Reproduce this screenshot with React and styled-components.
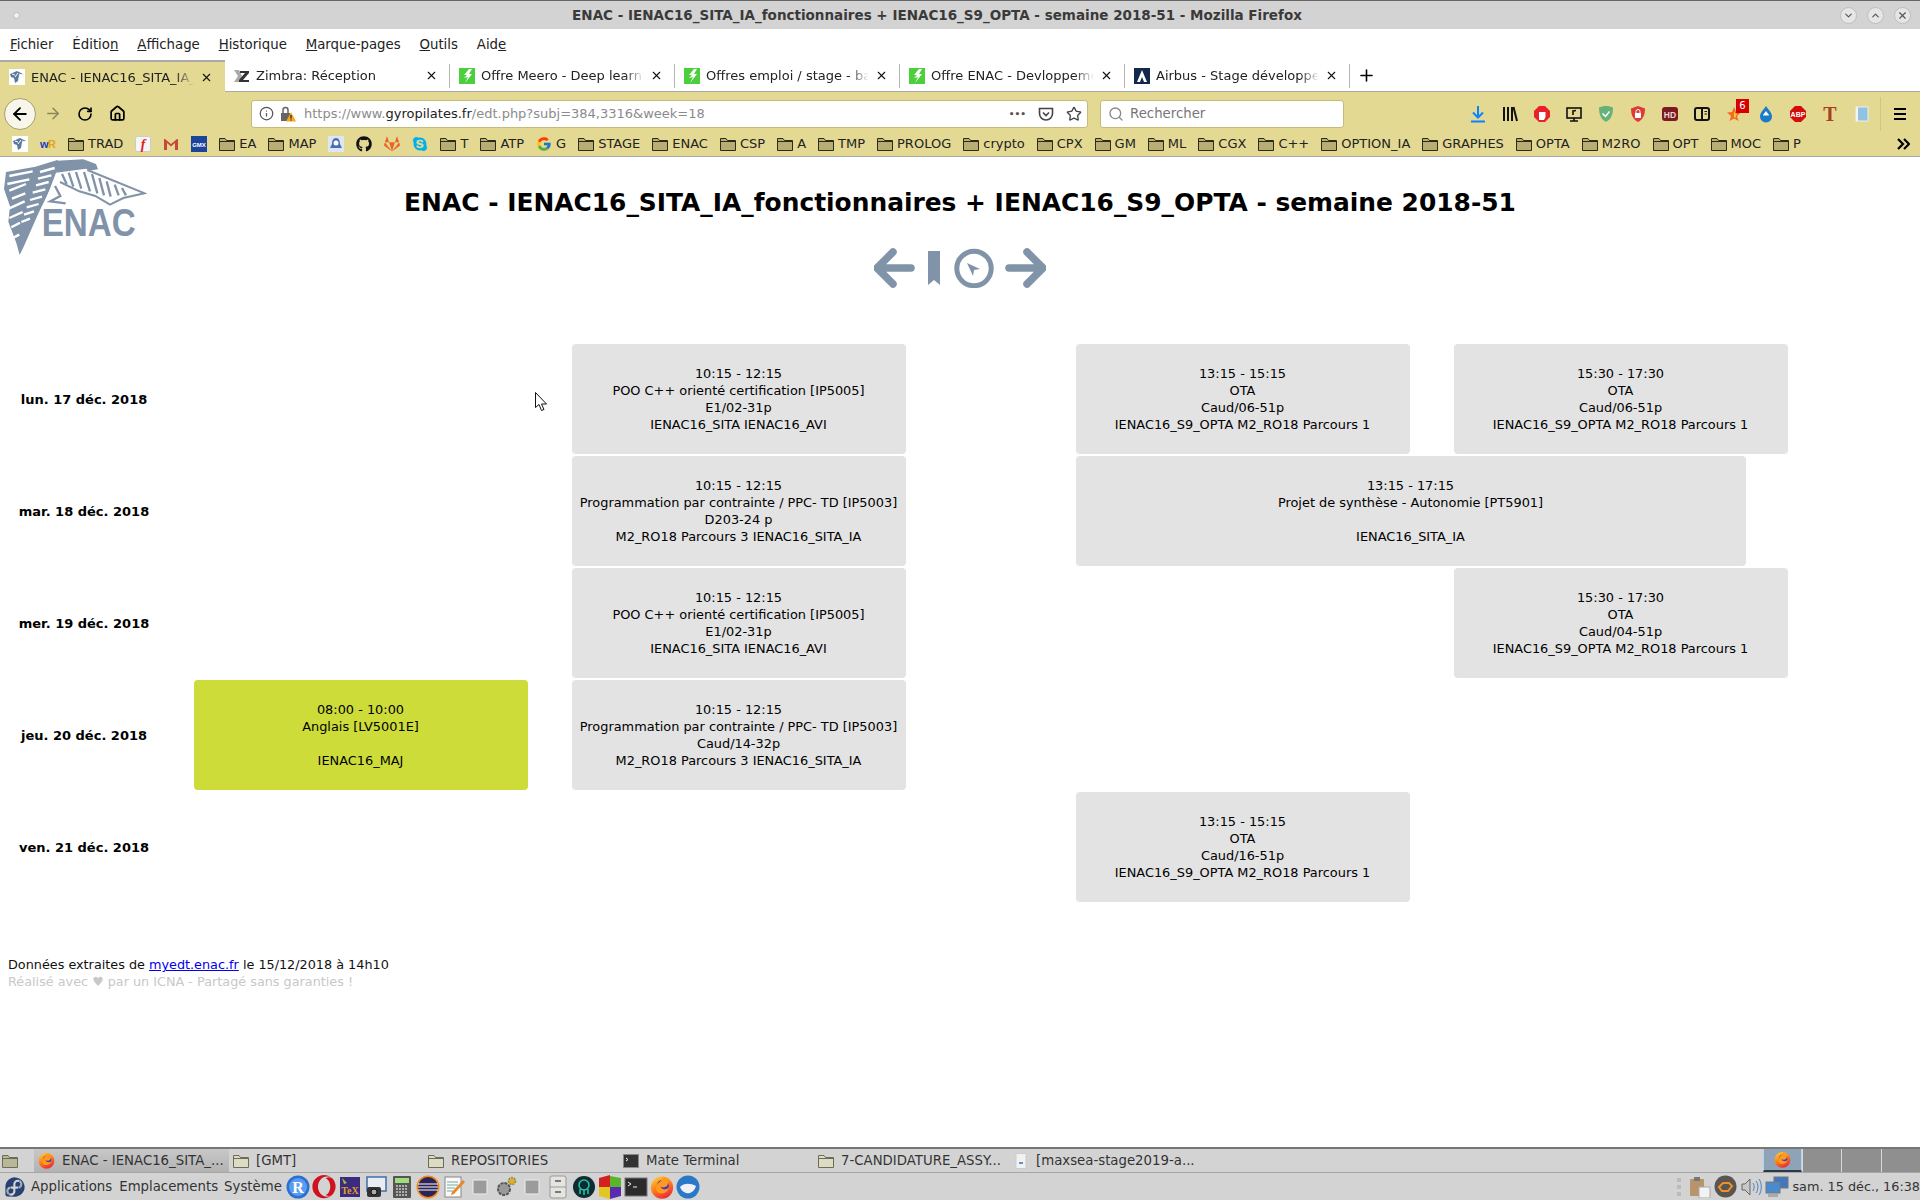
import styled, { createGlobalStyle } from 'styled-components'
import { ArrowLeft, ArrowRight, RotateCw, Home, Info, Star, Search, Plus, X, ChevronDown, ChevronUp } from 'lucide-react'
import { FaGithub, FaGitlab, FaSkype, FaFedora, FaOpera } from 'react-icons/fa'
import { FcGoogle } from 'react-icons/fc'

const Global = createGlobalStyle`
  html, body { margin: 0; padding: 0; background: #fff; overflow: hidden; }
  body { font-family: "DejaVu Sans", sans-serif; font-size: 13px; color: #000; }
  * { box-sizing: border-box; }
`

const Screen = styled.div`
  width: 1920px;
  height: 1200px;
  display: flex;
  flex-direction: column;
  position: relative;
  overflow: hidden;
`

const TitleBar = styled.div`
  height: 29px;
  flex: none;
  background: #d3d3d3;
  border-top: 1px solid #666;
  display: grid;
  grid-template-columns: 1fr auto 1fr;
  align-items: center;
  padding: 0 9px 0 13px;
  color: #3a3a3a;
  font-weight: bold;
  font-size: 13.5px;
`

const WindowTitle = styled.span`
  margin-right: 50px;
`

const WindowDot = styled.span`
  width: 7px;
  height: 7px;
  border-radius: 50%;
  background: #f2f2f2;
  border: 1px solid #bbb;
`

const WindowButtons = styled.div`
  display: flex;
  justify-content: flex-end;
  gap: 10px;
`

const WindowButton = styled.span`
  width: 17px;
  height: 17px;
  border-radius: 50%;
  background: #e6e6e6;
  border: 1px solid #bdbdbd;
  display: flex;
  align-items: center;
  justify-content: center;
  color: #555;
`

const MenuBar = styled.div`
  height: 31px;
  flex: none;
  display: flex;
  align-items: center;
  gap: 18.9px;
  padding-left: 10px;
  font-size: 13.3px;
  color: #222;
`

const TabStrip = styled.div`
  height: 32px;
  flex: none;
  display: flex;
  align-items: stretch;
  border-bottom: 1px solid #a9a9a9;
`

const Tab = styled.div`
  width: 225px;
  position: relative;
  display: flex;
  align-items: center;
  padding-left: 9px;
  gap: 6px;
  font-size: 13px;
  color: #222;
  background: ${p => (p.$active ? '#e3d992' : '#fff')};
  border-top: ${p => (p.$active ? '2px solid #a9a9a9' : '0')};
  margin-bottom: ${p => (p.$active ? '-1px' : '0')};
`

const TabLabel = styled.span`
  width: 163px;
  white-space: nowrap;
  overflow: hidden;
  -webkit-mask-image: linear-gradient(90deg, #000 88%, transparent);
  mask-image: linear-gradient(90deg, #000 88%, transparent);
`

const TabClose = styled.span`
  display: flex;
  color: #111;
`

const TabDivider = styled.span`
  width: 1px;
  height: 24px;
  background: #b5b5b5;
  align-self: center;
  margin-left: auto;
`

const NewTab = styled.span`
  display: flex;
  align-items: center;
  margin-left: 7px;
  color: #000;
`

const Toolbar = styled.div`
  height: 43px;
  flex: none;
  background: #e3d992;
  display: flex;
  align-items: center;
  padding-left: 4px;
`

const BackButton = styled.span`
  width: 32px;
  height: 32px;
  border-radius: 50%;
  background: #f8f6ea;
  border: 1px solid #a59f70;
  display: flex;
  align-items: center;
  justify-content: center;
`

const NavButton = styled.span`
  width: 18px;
  display: flex;
  justify-content: center;
  margin-left: ${p => p.$gap}px;
  color: ${p => p.$color || '#000'};
`

const UrlBar = styled.div`
  width: 837px;
  height: 28px;
  margin-left: 125px;
  background: #fff;
  border: 1px solid #c4bb7c;
  border-radius: 3px;
  display: flex;
  align-items: center;
  padding-left: 7px;
  font-size: 13px;
  color: #8b8b8b;
`

const UrlIcons = styled.span`
  display: flex;
  align-items: center;
  gap: 6px;
  width: 45px;
  color: #555;
`

const UrlHost = styled.span`
  color: #222;
`

const UrlActions = styled.span`
  margin-left: auto;
  display: flex;
  align-items: center;
  gap: 12px;
  padding-right: 5px;
  color: #444;
`

const Dots = styled.span`
  font-weight: bold;
  font-size: 9px;
  color: #555;
`

const SearchBar = styled.div`
  width: 244px;
  height: 28px;
  margin-left: 12px;
  background: #fff;
  border: 1px solid #c4bb7c;
  border-radius: 3px;
  display: flex;
  align-items: center;
  gap: 6px;
  padding-left: 7px;
  font-size: 13.3px;
  color: #777;
`

const ExtIcons = styled.div`
  margin-left: auto;
  padding-right: 4px;
  display: flex;
  align-items: center;
`

const ExtIcon = styled.span`
  width: 32px;
  height: 24px;
  position: relative;
  display: flex;
  align-items: center;
  justify-content: center;
`

const Badge = styled.span`
  position: absolute;
  top: -3px;
  right: 1px;
  width: 13px;
  height: 14px;
  background: #d70000;
  color: #fff;
  font-size: 10px;
  line-height: 14px;
  text-align: center;
`

const ToolbarDivider = styled.span`
  width: 1px;
  height: 34px;
  background: #cfc585;
  margin: 0 3px 0 2px;
`

const BookmarksBar = styled.div`
  height: 22px;
  flex: none;
  background: #e3d992;
  border-bottom: 1px solid #a9a9a9;
  display: flex;
  align-items: center;
  gap: 12px;
  padding: 0 10px 4px 12px;
  font-size: 13px;
  color: #222;
`

const Bookmark = styled.span`
  display: flex;
  align-items: center;
  gap: 4px;
  white-space: nowrap;
`

const Overflow = styled.span`
  margin-left: auto;
  display: flex;
`

const Page = styled.main`
  flex: 1;
  background: #fff;
`

const Header = styled.header`
  display: grid;
  grid-template-columns: 1fr auto 1fr;
  height: 187px;
`

const Logo = styled.svg`
  display: block;
  width: 147px;
  height: 100px;
`

const TitleColumn = styled.div`
  display: flex;
  flex-direction: column;
  align-items: center;
`

const Heading = styled.h1`
  margin: 29px 0 28px;
  font-size: 24.9px;
  line-height: 34px;
  font-weight: bold;
  white-space: nowrap;
`

const WeekNav = styled.nav`
  width: 172px;
  height: 40px;
`

const Schedule = styled.section`
  display: grid;
  grid-template-columns: 193.5px repeat(38, 42px);
  grid-auto-rows: 110px;
  row-gap: 2px;
`

const DayLabel = styled.div`
  grid-column: 1;
  grid-row: ${p => p.$row};
  width: 168px;
  display: flex;
  align-items: center;
  justify-content: center;
  font-weight: bold;
  font-size: 13px;
`

const Course = styled.div`
  grid-row: ${p => p.$row};
  grid-column: ${p => p.$start + 2} / span ${p => p.$span};
  margin-right: 2px;
  background: ${p => (p.$green ? '#cddc39' : '#e3e3e3')};
  border-radius: 4px;
  display: flex;
  flex-direction: column;
  justify-content: center;
  text-align: center;
  font-size: 12.9px;
  line-height: 17px;
`

const CourseLine = styled.div`
  min-height: 17px;
  white-space: nowrap;
`

const Footer = styled.footer`
  margin-top: 54px;
  padding-left: 8px;
  font-size: 12.8px;
  line-height: 17px;
  color: #111;

  a {
    color: #0000ee;
  }
`

const Credit = styled.div`
  color: #c8c8c8;
`

const Cursor = styled.svg`
  position: absolute;
  left: 535px;
  top: 392px;
`

const Taskbar = styled.div`
  height: 53px;
  flex: none;
  background: #d3d3d3;
  border-top: 2px solid #777;
  font-size: 13.3px;
  color: #333;
  display: flex;
  flex-direction: column;
`

const TaskRow = styled.div`
  height: 24px;
  flex: none;
  display: flex;
  align-items: stretch;
  border-bottom: 1px solid #a6a6a6;
`

const DesktopButton = styled.span`
  width: 34px;
  display: flex;
  align-items: center;
  padding-left: 2px;
`

const Task = styled.span`
  width: 195px;
  display: flex;
  align-items: center;
  gap: 7px;
  padding-left: 4px;
  white-space: nowrap;
  background: ${p => (p.$active ? 'linear-gradient(#c8c8c8, #b2b2b2)' : 'transparent')};
`

const Workspaces = styled.div`
  margin-left: auto;
  display: flex;
`

const Workspace = styled.span`
  width: ${p => (p.$active ? 39 : 39.5)}px;
  display: flex;
  align-items: center;
  justify-content: center;
  background: ${p => (p.$active ? '#8fa3b8' : '#8f8f8f')};
  border-left: 1px solid ${p => (p.$active ? '#b8d4ec' : '#d8d8d8')};
  border-right: ${p => (p.$active ? '1px solid #b8d4ec' : '0')};
  border-bottom: ${p => (p.$active ? '2px solid #2c3a48' : '0')};
`

const PanelRow = styled.div`
  flex: 1;
  display: flex;
  align-items: center;
  padding-left: 4px;
`

const PanelMenu = styled.span`
  margin-left: ${p => p.$gap}px;
`

const Launchers = styled.div`
  display: flex;
  align-items: center;
  gap: 2px;
  margin-left: 4px;
`

const Launcher = styled.span`
  width: 24px;
  height: 24px;
  display: flex;
  align-items: center;
  justify-content: center;
`

const Tray = styled.div`
  margin-left: auto;
  display: flex;
  align-items: center;
  gap: 3px;
  white-space: nowrap;
`

const Clock = styled.span`
  font-size: 12.8px;
`

const Grip = styled.span`
  width: 4px;
  height: 18px;
  margin-right: 5px;
  background: repeating-linear-gradient(#bbb 0 4px, transparent 4px 7px);
`

const SLATE = '#8093a8'

const FolderIcon = ({ fill = '#b8ae74', stroke = '#2d2a18' }) => (
  <svg width="16" height="16" viewBox="0 0 16 16">
    <path d="M.5 2.500h5.500l1.500 2h8v10H.5z" fill={fill} stroke={stroke} />
    <path d="M.5 5.500h15" stroke={stroke} />
  </svg>
)

const EnacFav = () => (
  <svg width="16" height="16" viewBox="0 0 16 16">
    <rect width="16" height="16" fill="#fff" />
    <path d="M1 5l7-3 6 3-4 1-1 6-3 2-1-5-3-1z" fill="#5a7aa0" />
    <path d="M3 5l3 1M6 8l3-4M10 5l3 1" stroke="#fff" />
  </svg>
)

const ZimbraFav = () => (
  <svg width="16" height="16" viewBox="0 0 16 16">
    <path d="M0 2h5l3 6-3 6H0l4-6z" fill="#aaa" />
    <path d="M6 3h9v2l-6 7h6v2H5v-2l6-7H6z" fill="#333" />
  </svg>
)

const MeeroFav = () => (
  <svg width="16" height="16" viewBox="0 0 16 16">
    <rect width="16" height="16" fill="#4ccf3c" />
    <path d="M10 1L5 7l3 0-3 3 4-1-3 6 7-9-3 0 3-5z" fill="#fff" />
  </svg>
)

const AirbusFav = () => (
  <svg width="16" height="16" viewBox="0 0 16 16">
    <rect width="16" height="16" fill="#14284b" />
    <path d="M8 2l5 12h-3L8 9l-2 5H3z" fill="#fff" />
  </svg>
)

const Firefox = ({ size = 16 }) => (
  <svg width={size} height={size} viewBox="0 0 16 16">
    <defs>
      <linearGradient id="foxBody" x1="0.2" y1="0" x2="0.7" y2="1">
        <stop offset="0" stopColor="#ffcb2e" />
        <stop offset="0.5" stopColor="#ff7a1a" />
        <stop offset="1" stopColor="#e8243c" />
      </linearGradient>
    </defs>
    <circle cx="8" cy="8.4" r="7.4" fill="url(#foxBody)" />
    <circle cx="8.6" cy="7.2" r="4" fill="#4a3ac0" />
    <path d="M9 1c3 1 4 4 2.500 6-1 1.400-3 1.400-4.500.8 1 2 3.600 2.600 5.600.6-.8 3-3.600 4.600-6.600 3.600C3.800 11 3.400 8 5 6c1-1.400 3-2 4-5z" fill="#ff9a1f" />
  </svg>
)

const LockWarning = () => (
  <svg width="16" height="16" viewBox="0 0 16 16">
    <rect x="1" y="7" width="9" height="8" fill="#666" />
    <path d="M3 7V4a2.500 2.500 0 015 0v3" fill="none" stroke="#666" strokeWidth="1.5" />
    <path d="M11 6l5 9.500H6z" fill="#f5a623" />
    <path d="M11 9v3.500M11 13.500v1" stroke="#000" />
  </svg>
)

const Pocket = () => (
  <svg width="16" height="16" viewBox="0 0 16 16" fill="none" stroke="#444" strokeWidth="1.6">
    <path d="M1.500 2.500h13v5a6.500 6.500 0 01-13 0z" />
    <path d="M5 6.500l3 3 3-3" />
  </svg>
)

const extIcons = [
  <svg key="dl" width="16" height="18" viewBox="0 0 16 18" fill="none" stroke="#0a84ff" strokeWidth="2">
    <path d="M8 1v11M3 7.500l5 5 5-5M1 16.500h14" />
  </svg>,
  <svg key="lib" width="16" height="16" viewBox="0 0 16 16" stroke="#111" strokeWidth="2">
    <path d="M2 1v14M6 1v14M10 1v14M11.500 1l3.500 14" />
  </svg>,
  <svg key="hand" width="16" height="16" viewBox="0 0 16 16">
    <path d="M5 0h6l5 5v6l-5 5H5l-5-5V5z" fill="#e8202a" />
    <path d="M5 14V6h6.500v5L10 14z" fill="#fff" />
  </svg>,
  <svg key="mon" width="16" height="16" viewBox="0 0 16 16">
    <rect x="1" y="2" width="14" height="10" fill="none" stroke="#111" strokeWidth="1.6" />
    <path d="M4 15h8M8 12v3M7 9V5l3-.5" stroke="#111" strokeWidth="1.6" fill="none" />
  </svg>,
  <svg key="ad" width="16" height="18" viewBox="0 0 16 18">
    <path d="M8 1c3 0 5 .6 7 1.600C15 10 13 14.500 8 17 3 14.500 1 10 1 2.600 3 1.600 5 1 8 1z" fill="#67b279" />
    <path d="M4.500 8.500L7.500 11.500l4-5" fill="none" stroke="#fff" strokeWidth="1.5" />
  </svg>,
  <svg key="shield" width="16" height="18" viewBox="0 0 16 18">
    <path d="M8 1l7 2.500C15 10 13 14.500 8 17 3 14.500 1 10 1 3.500z" fill="#dc3c35" />
    <rect x="5" y="8" width="6" height="5" fill="#fff" />
    <path d="M6 8V6.500a2 2 0 014 0V8" fill="none" stroke="#fff" />
  </svg>,
  <svg key="hd" width="16" height="14" viewBox="0 0 16 14">
    <rect width="16" height="14" rx="3" fill="#7c1a22" />
    <text x="8" y="10.5" textAnchor="middle" fontSize="8.5" fontWeight="bold" fill="#e9d6d6" fontFamily="Liberation Sans">HD</text>
  </svg>,
  <svg key="side" width="16" height="16" viewBox="0 0 16 16" fill="none" stroke="#111" strokeWidth="2">
    <rect x="1" y="2" width="14" height="12" rx="2" />
    <path d="M8 2v12" />
    <path d="M10.500 5.500h2.500M10.500 8h2.500" strokeWidth="1" />
  </svg>,
  <svg key="star" width="16" height="16" viewBox="0 0 16 16">
    <path d="M8 1l2 5 5 .5-4 3.500 1.500 5L8 12.500 3.500 15 5 10 1 6.500 6 6z" fill="#f36b21" />
    <path d="M8 5l1 2.500 2.500.5-2 1.500.5 2.500-2-1.200z" fill="#ffd23c" />
  </svg>,
  <svg key="drop" width="14" height="18" viewBox="0 0 14 18">
    <path d="M7 1c2 3.500 6 6.500 6 10.500a6 6 0 01-12 0C1 7.500 5 4.500 7 1z" fill="#1a7cc8" />
    <path d="M7 6c1 2 3 3 3 4.500H4C4 9 6 8 7 6z" fill="#fff" />
  </svg>,
  <svg key="abp" width="16" height="16" viewBox="0 0 16 16">
    <path d="M5 0h6l5 5v6l-5 5H5l-5-5V5z" fill="#d40c0c" />
    <text x="8" y="10.8" textAnchor="middle" fontSize="7" fontWeight="bold" fill="#fff" fontFamily="Liberation Sans">ABP</text>
  </svg>,
  <svg key="t" width="16" height="18" viewBox="0 0 16 18">
    <text x="8" y="16" textAnchor="middle" fontSize="20" fontWeight="bold" fill="#a8401f" fontFamily="Liberation Serif">T</text>
  </svg>,
  <svg key="book" width="14" height="16" viewBox="0 0 14 16">
    <rect x="1" y="1" width="12" height="14" fill="#8ec4e2" stroke="#eee" />
    <rect x="1" y="1" width="2" height="14" fill="#f4f4f4" />
  </svg>,
]

const MenuIcon = () => (
  <svg width="14" height="14" viewBox="0 0 14 14" stroke="#000" strokeWidth="2">
    <path d="M1 2h12M1 7h12M1 12h12" />
  </svg>
)

const Chevrons = () => (
  <svg width="14" height="12" viewBox="0 0 14 12" fill="none" stroke="#000" strokeWidth="2.2">
    <path d="M2 1l5 5-5 5M8 1l5 5-5 5" />
  </svg>
)

const favs = {
  enac: <EnacFav />,
  wr: (
    <svg width="16" height="16" viewBox="0 0 16 16">
      <text x="0" y="12" fontSize="11" fontWeight="bold" fill="#1a3bc0" fontFamily="Liberation Sans">w</text>
      <text x="8" y="12" fontSize="11" fontWeight="bold" fill="#e8a020" fontFamily="Liberation Sans">R</text>
    </svg>
  ),
  flash: (
    <svg width="16" height="16" viewBox="0 0 16 16">
      <rect x=".5" y=".5" width="15" height="15" rx="2" fill="#f6f6f6" stroke="#ccc" />
      <text x="8" y="13" textAnchor="middle" fontSize="14" fontStyle="italic" fontWeight="bold" fill="#e02020" fontFamily="Liberation Serif">f</text>
    </svg>
  ),
  gmail: (
    <svg width="16" height="16" viewBox="0 0 16 16">
      <path d="M1 3v11h3V7l4 3.500L12 7v7h3V3h-1L8 8 2 3z" fill="#c8493c" />
    </svg>
  ),
  gmx: (
    <svg width="16" height="16" viewBox="0 0 16 16">
      <rect width="16" height="16" fill="#1c449b" />
      <text x="8" y="10.5" textAnchor="middle" fontSize="6" fontWeight="bold" fill="#fff" fontFamily="Liberation Sans">GMX</text>
    </svg>
  ),
  blob: (
    <svg width="16" height="16" viewBox="0 0 16 16">
      <rect width="16" height="16" fill="#dfe6f3" />
      <path d="M8 2c3 0 4 3 4 6l2 4H2l2-4c0-3 1-6 4-6z" fill="#4a6fb0" />
      <circle cx="8" cy="7" r="2.500" fill="#fff" />
    </svg>
  ),
  github: <FaGithub size={16} color="#111" />,
  gitlab: <FaGitlab size={16} color="#e8662a" />,
  skype: <FaSkype size={16} color="#00aff0" />,
  google: <FcGoogle size={16} />,
}

const bookmarks = [
  { icon: 'enac' }, { icon: 'wr' }, { label: 'TRAD' }, { icon: 'flash' }, { icon: 'gmail' }, { icon: 'gmx' },
  { label: 'EA' }, { label: 'MAP' }, { icon: 'blob' }, { icon: 'github' }, { icon: 'gitlab' }, { icon: 'skype' },
  { label: 'T' }, { label: 'ATP' }, { icon: 'google', label: 'G' }, { label: 'STAGE' }, { label: 'ENAC' },
  { label: 'CSP' }, { label: 'A' }, { label: 'TMP' }, { label: 'PROLOG' }, { label: 'crypto' }, { label: 'CPX' },
  { label: 'GM' }, { label: 'ML' }, { label: 'CGX' }, { label: 'C++' }, { label: 'OPTION_IA' }, { label: 'GRAPHES' },
  { label: 'OPTA' }, { label: 'M2RO' }, { label: 'OPT' }, { label: 'MOC' }, { label: 'P' },
]

const tabs = [
  { title: 'ENAC - IENAC16_SITA_IA_fonctionnaires', icon: <EnacFav />, active: true },
  { title: 'Zimbra: Réception', icon: <ZimbraFav /> },
  { title: 'Offre Meero - Deep learning', icon: <MeeroFav /> },
  { title: 'Offres emploi / stage - ba', icon: <MeeroFav /> },
  { title: 'Offre ENAC - Devloppement', icon: <MeeroFav /> },
  { title: 'Airbus - Stage développeur', icon: <AirbusFav /> },
]

const days = ['lun. 17 déc. 2018', 'mar. 18 déc. 2018', 'mer. 19 déc. 2018', 'jeu. 20 déc. 2018', 'ven. 21 déc. 2018']

const POO = ['10:15 - 12:15', 'POO C++ orienté certification [IP5005]', 'E1/02-31p', 'IENAC16_SITA IENAC16_AVI']
const PPC = 'Programmation par contrainte / PPC- TD [IP5003]'
const OTA_GROUP = 'IENAC16_S9_OPTA M2_RO18 Parcours 1'
const RO3 = 'M2_RO18 Parcours 3 IENAC16_SITA_IA'

const courses = [
  { row: 1, start: 9, span: 8, lines: POO },
  { row: 1, start: 21, span: 8, lines: ['13:15 - 15:15', 'OTA', 'Caud/06-51p', OTA_GROUP] },
  { row: 1, start: 30, span: 8, lines: ['15:30 - 17:30', 'OTA', 'Caud/06-51p', OTA_GROUP] },
  { row: 2, start: 9, span: 8, lines: ['10:15 - 12:15', PPC, 'D203-24 p', RO3] },
  { row: 2, start: 21, span: 16, lines: ['13:15 - 17:15', 'Projet de synthèse - Autonomie [PT5901]', '', 'IENAC16_SITA_IA'] },
  { row: 3, start: 9, span: 8, lines: POO },
  { row: 3, start: 30, span: 8, lines: ['15:30 - 17:30', 'OTA', 'Caud/04-51p', OTA_GROUP] },
  { row: 4, start: 0, span: 8, green: true, lines: ['08:00 - 10:00', 'Anglais [LV5001E]', '', 'IENAC16_MAJ'] },
  { row: 4, start: 9, span: 8, lines: ['10:15 - 12:15', PPC, 'Caud/14-32p', RO3] },
  { row: 5, start: 21, span: 8, lines: ['13:15 - 15:15', 'OTA', 'Caud/16-51p', OTA_GROUP] },
]

const Gray = ({ children }) => (
  <svg width="16" height="16" viewBox="0 0 16 16">{children}</svg>
)

const launchers = [
  <svg key="r" width="24" height="24" viewBox="0 0 24 24">
    <circle cx="12" cy="12" r="11.5" fill="#2c6fd0" />
    <circle cx="12" cy="12" r="9" fill="#5a9cf0" />
    <text x="12" y="18" textAnchor="middle" fontSize="16" fontWeight="bold" fill="#fff" fontFamily="Liberation Serif">R</text>
  </svg>,
  <FaOpera key="o" size={24} color="#d0121e" />,
  <svg key="tex" width="24" height="24" viewBox="0 0 24 24">
    <rect x="2" y="2" width="20" height="20" fill="#3a2a80" />
    <text x="12" y="19" textAnchor="middle" fontSize="10" fontWeight="bold" fill="#e0a020" fontFamily="Liberation Serif">TeX</text>
    <path d="M4 3l5 5-3 1z" fill="#9bc53d" />
  </svg>,
  <svg key="shot" width="24" height="24" viewBox="0 0 24 24">
    <rect x="3" y="2" width="19" height="14" fill="#e8edf3" stroke="#3f6fa8" strokeWidth="1.5" />
    <rect x="3" y="12" width="14" height="10" rx="2" fill="#333" />
    <circle cx="10" cy="17" r="3" fill="#aaa" stroke="#111" />
  </svg>,
  <svg key="calc" width="24" height="24" viewBox="0 0 24 24">
    <rect x="3" y="1" width="18" height="22" rx="1" fill="#555" />
    <rect x="5" y="3" width="14" height="5" fill="#9fdc7c" />
    <path d="M6 11h12M6 14h12M6 17h12M6 20h12" stroke="#ccc" strokeWidth="1.6" strokeDasharray="2 1" />
  </svg>,
  <svg key="ecl" width="24" height="24" viewBox="0 0 24 24">
    <circle cx="12" cy="12" r="11.5" fill="#f08a1e" />
    <circle cx="12" cy="12" r="10" fill="#2c2255" />
    <path d="M2 9h20M2 12h20M2 15h20" stroke="#fff" strokeWidth="1.2" />
  </svg>,
  <svg key="note" width="24" height="24" viewBox="0 0 24 24">
    <rect x="3" y="2" width="16" height="20" fill="#fafafa" stroke="#888" />
    <path d="M5 7h11M5 10h11M5 13h8M5 16h6" stroke="#7a9" />
    <path d="M21 5l2 2-11 12-3 1 1-3z" fill="#e8862a" />
  </svg>,
  <Gray key="g1"><rect x="1" y="1" width="14" height="14" rx="1" fill="#9b9b9b" stroke="#eee" /></Gray>,
  <svg key="gear" width="24" height="24" viewBox="0 0 24 24">
    <circle cx="10" cy="14" r="6" fill="#999" stroke="#555" strokeDasharray="3 1" strokeWidth="2" />
    <circle cx="18" cy="6" r="3.5" fill="#e0b020" stroke="#886" strokeDasharray="2 1" strokeWidth="1.5" />
  </svg>,
  <Gray key="g2"><rect x="1" y="1" width="14" height="14" rx="1" fill="#9b9b9b" stroke="#eee" /></Gray>,
  <svg key="cab" width="24" height="24" viewBox="0 0 24 24">
    <rect x="4" y="1" width="16" height="22" rx="2" fill="#e4e4e0" stroke="#999" />
    <path d="M4 12h16" stroke="#999" />
    <path d="M9 6h6M9 17h6" stroke="#555" strokeWidth="1.5" />
  </svg>,
  <svg key="kr" width="24" height="24" viewBox="0 0 24 24">
    <circle cx="12" cy="12" r="11" fill="#0f2c33" />
    <circle cx="12" cy="10" r="5" fill="none" stroke="#21c7a8" strokeWidth="1.5" />
    <path d="M8 14v5M12 15v5M16 14v5" stroke="#21c7a8" strokeWidth="1.5" />
  </svg>,
  <svg key="rg" width="24" height="24" viewBox="0 0 24 24">
    <path d="M1 3l11-3v12H1z" fill="#d42020" />
    <path d="M12 1l11 2v9H12z" fill="#5ab52a" />
    <path d="M1 12h11v12l-11-3z" fill="#e0c820" />
    <path d="M12 12h11v9l-11 3z" fill="#5a2ab0" />
  </svg>,
  <svg key="term" width="24" height="24" viewBox="0 0 24 24">
    <rect x="1" y="3" width="22" height="18" fill="#2b2b2b" stroke="#777" />
    <path d="M4 7l3 2-3 2M9 12h4" stroke="#eee" fill="none" />
  </svg>,
  <Firefox key="ff" size={24} />,
  <svg key="tb" width="24" height="24" viewBox="0 0 24 24">
    <circle cx="12" cy="12" r="11.5" fill="#2a78c8" />
    <path d="M4 12c4-4 10-4 16-1-2 6-6 8-10 7-3-1-5-3-6-6z" fill="#f0f0f5" />
  </svg>,
]

const TaskFolder = () => <FolderIcon fill="#dcdcc6" stroke="#6d6d52" />

const EnacLogo = () => (
  <Logo viewBox="0 21 441 300" aria-label="ENAC">
    {/* left wing */}
    <path d="M18 66l88-16 66-20 8 8-26 72-38 78-44 100-13 27-10-36-24-64 5-46-18-52z" fill={SLATE} />
    <path d="M182 42l-58 152" stroke="#fff" strokeWidth="7" fill="none" />
    <path d="M28 78l70-14M22 102l66-14M28 122l50-20M36 146l40-16M26 176l48-22M28 204l40-18M34 232l26-14M42 262l16-8M120 66l44-12M114 86l40-10M108 106l38-10M98 128l38-10M90 150l36-10M80 172l36-10M72 194l30-10M64 216l26-10"
      stroke="#fff" strokeWidth="7" fill="none" />
    {/* head and shoulder */}
    <path d="M172 32l78-4 38 14 6 16-26 4-10-6-90 12z" fill={SLATE} />
    {/* right wing ribs */}
    <path d="M262 60l172 70-64 14-40 20-44-26-48-14-58-28" stroke={SLATE} strokeWidth="6" fill="none" />
    <path d="M186 72l14 30M206 68l14 42M228 66l16 50M252 66l18 58M276 72l16 58M298 84l14 52M320 94l12 46M344 104l12 32M366 114l12 22"
      stroke={SLATE} strokeWidth="7" fill="none" />
    {/* legs */}
    <path d="M165 108l16 30-30 16 46 6" stroke={SLATE} strokeWidth="7" fill="none" />
    <text x="125" y="258" fontSize="116" fontWeight="bold" fill={SLATE} fontFamily="Liberation Sans, sans-serif" textLength="282" lengthAdjust="spacingAndGlyphs">ENAC</text>
  </Logo>
)

const WeekNavIcons = () => (
  <WeekNav aria-label="semaine">
    <svg width="172" height="40" viewBox="0 0 172 40" fill="none" stroke={SLATE}>
      <path d="M37 20H4M19 4L3 20l16 16" strokeWidth="7.5" strokeLinecap="round" strokeLinejoin="round" />
      <path d="M54 3h12v34l-6-5-6 5z" fill={SLATE} stroke="none" />
      <circle cx="100" cy="20.500" r="17.200" strokeWidth="5" />
      <path d="M93 15l13 6-6 1-1 6z" fill={SLATE} stroke="none" />
      <path d="M135 20h33M153 4l16 16-16 16" strokeWidth="7.5" strokeLinecap="round" strokeLinejoin="round" />
    </svg>
  </WeekNav>
)

export default function App() {
  return (
    <Screen>
      <Global />
      <TitleBar>
        <WindowDot />
        <WindowTitle>ENAC - IENAC16_SITA_IA_fonctionnaires + IENAC16_S9_OPTA - semaine 2018-51 - Mozilla Firefox</WindowTitle>
        <WindowButtons>
          <WindowButton><ChevronDown size={11} strokeWidth={2.5} /></WindowButton>
          <WindowButton><ChevronUp size={11} strokeWidth={2.5} /></WindowButton>
          <WindowButton><X size={11} strokeWidth={2.5} /></WindowButton>
        </WindowButtons>
      </TitleBar>

      <MenuBar>
        <span><u>F</u>ichier</span>
        <span>Éditio<u>n</u></span>
        <span><u>A</u>ffichage</span>
        <span><u>H</u>istorique</span>
        <span><u>M</u>arque-pages</span>
        <span><u>O</u>utils</span>
        <span>Aid<u>e</u></span>
      </MenuBar>

      <TabStrip>
        {tabs.map((t, i) => (
          <Tab key={i} $active={t.active}>
            {t.icon}
            <TabLabel>{t.title}</TabLabel>
            <TabClose><X size={13} strokeWidth={2} /></TabClose>
            {!t.active && <TabDivider />}
          </Tab>
        ))}
        <NewTab><Plus size={19} strokeWidth={2} /></NewTab>
      </TabStrip>

      <Toolbar>
        <BackButton><ArrowLeft size={20} strokeWidth={2.2} /></BackButton>
        <NavButton $gap={8} $color="#8c8657"><ArrowRight size={19} strokeWidth={2} /></NavButton>
        <NavButton $gap={14}><RotateCw size={16} strokeWidth={2.4} /></NavButton>
        <NavButton $gap={14}><Home size={17} strokeWidth={2.4} /></NavButton>
        <UrlBar>
          <UrlIcons><Info size={15} /><LockWarning /></UrlIcons>
          <span>https://www.<UrlHost>gyropilates.fr</UrlHost>/edt.php?subj=384,3316&amp;week=18</span>
          <UrlActions>
            <Dots>•••</Dots>
            <Pocket />
            <Star size={16} strokeWidth={2} />
          </UrlActions>
        </UrlBar>
        <SearchBar><Search size={16} color="#888" />Rechercher</SearchBar>
        <ExtIcons>
          {extIcons.map((icon, i) => (
            <ExtIcon key={i}>
              {icon}
              {i === 8 && <Badge>6</Badge>}
            </ExtIcon>
          ))}
          <ToolbarDivider />
          <ExtIcon><MenuIcon /></ExtIcon>
        </ExtIcons>
      </Toolbar>

      <BookmarksBar>
        {bookmarks.map((b, i) => (
          <Bookmark key={i}>
            {b.icon ? favs[b.icon] : <FolderIcon />}
            {b.label}
          </Bookmark>
        ))}
        <Overflow><Chevrons /></Overflow>
      </BookmarksBar>

      <Page>
        <Header>
          <EnacLogo />
          <TitleColumn>
            <Heading>ENAC - IENAC16_SITA_IA_fonctionnaires + IENAC16_S9_OPTA - semaine 2018-51</Heading>
            <WeekNavIcons />
          </TitleColumn>
        </Header>

        <Schedule>
          {days.map((d, i) => (
            <DayLabel key={d} $row={i + 1}>{d}</DayLabel>
          ))}
          {courses.map((c, i) => (
            <Course key={i} $row={c.row} $start={c.start} $span={c.span} $green={c.green}>
              {c.lines.map((l, j) => (
                <CourseLine key={j}>{l}</CourseLine>
              ))}
            </Course>
          ))}
        </Schedule>

        <Footer>
          <div>Données extraites de <a href="#edt">myedt.enac.fr</a> le 15/12/2018 à 14h10</div>
          <Credit>Réalisé avec ♥ par un ICNA - Partagé sans garanties !</Credit>
        </Footer>
      </Page>

      <Cursor width="13" height="19" viewBox="0 0 13 19">
        <path d="M.5.500v15l3.500-3 2.500 6 2.500-1-2.500-5.500h5z" fill="#fff" stroke="#111" />
      </Cursor>

      <Taskbar>
        <TaskRow>
          <DesktopButton><FolderIcon fill="#b9b79a" stroke="#6d6d52" /></DesktopButton>
          <Task $active><Firefox size={17} />ENAC - IENAC16_SITA_...</Task>
          <Task><TaskFolder />[GMT]</Task>
          <Task><TaskFolder />REPOSITORIES</Task>
          <Task>
            <svg width="16" height="16" viewBox="0 0 16 16">
              <rect x=".5" y="1.500" width="15" height="13" fill="#333" stroke="#888" />
              <path d="M3 5l2 1.500L3 8" stroke="#eee" fill="none" />
            </svg>
            Mate Terminal
          </Task>
          <Task><TaskFolder />7-CANDIDATURE_ASSY...</Task>
          <Task>
            <svg width="16" height="16" viewBox="0 0 16 16">
              <path d="M3 .5h10v15H3z" fill="#f2f2f2" stroke="#ccc" />
              <path d="M6 10h4" stroke="#6a8fc0" strokeWidth="2" />
            </svg>
            [maxsea-stage2019-a...
          </Task>
          <Workspaces>
            <Workspace $active><Firefox size={17} /></Workspace>
            <Workspace />
            <Workspace />
            <Workspace />
          </Workspaces>
        </TaskRow>
        <PanelRow>
          <FaFedora size={22} color="#294172" />
          <PanelMenu $gap={5}>Applications</PanelMenu>
          <PanelMenu $gap={7}>Emplacements</PanelMenu>
          <PanelMenu $gap={6}>Système</PanelMenu>
          <Launchers>{launchers.map((l, i) => <Launcher key={i}>{l}</Launcher>)}</Launchers>
          <Tray>
            <Grip />
            <svg width="22" height="22" viewBox="0 0 22 22">
              <rect x="1" y="3" width="14" height="17" rx="1" fill="#b8946a" />
              <rect x="5" y="1" width="6" height="4" fill="#777" />
              <rect x="10" y="11" width="11" height="11" fill="#f2f2f2" stroke="#aaa" />
            </svg>
            <svg width="23" height="23" viewBox="0 0 23 23">
              <circle cx="11.5" cy="11.5" r="11" fill="#5a5550" />
              <path d="M5 12l4-4h6l3 3-4 5H8z" fill="none" stroke="#f0902a" strokeWidth="2" />
            </svg>
            <svg width="22" height="22" viewBox="0 0 22 22" fill="none">
              <path d="M2 8h3l5-5v16l-5-5H2z" fill="#c8c8c8" stroke="#666" />
              <path d="M13 7c1.500 2 1.500 6 0 8M16 5c2.500 3 2.500 9 0 12M19 3c3 4 3 12 0 16" stroke="#4a7fc0" />
            </svg>
            <svg width="24" height="24" viewBox="0 0 24 24">
              <rect x="9" y="2" width="14" height="11" fill="#3f78c0" stroke="#777" />
              <rect x="1" y="7" width="14" height="11" fill="#4a8ad0" stroke="#777" />
              <rect x="3" y="19" width="10" height="3" fill="#aaa" />
            </svg>
            <Clock>sam. 15 déc., 16:38</Clock>
          </Tray>
        </PanelRow>
      </Taskbar>
    </Screen>
  )
}
